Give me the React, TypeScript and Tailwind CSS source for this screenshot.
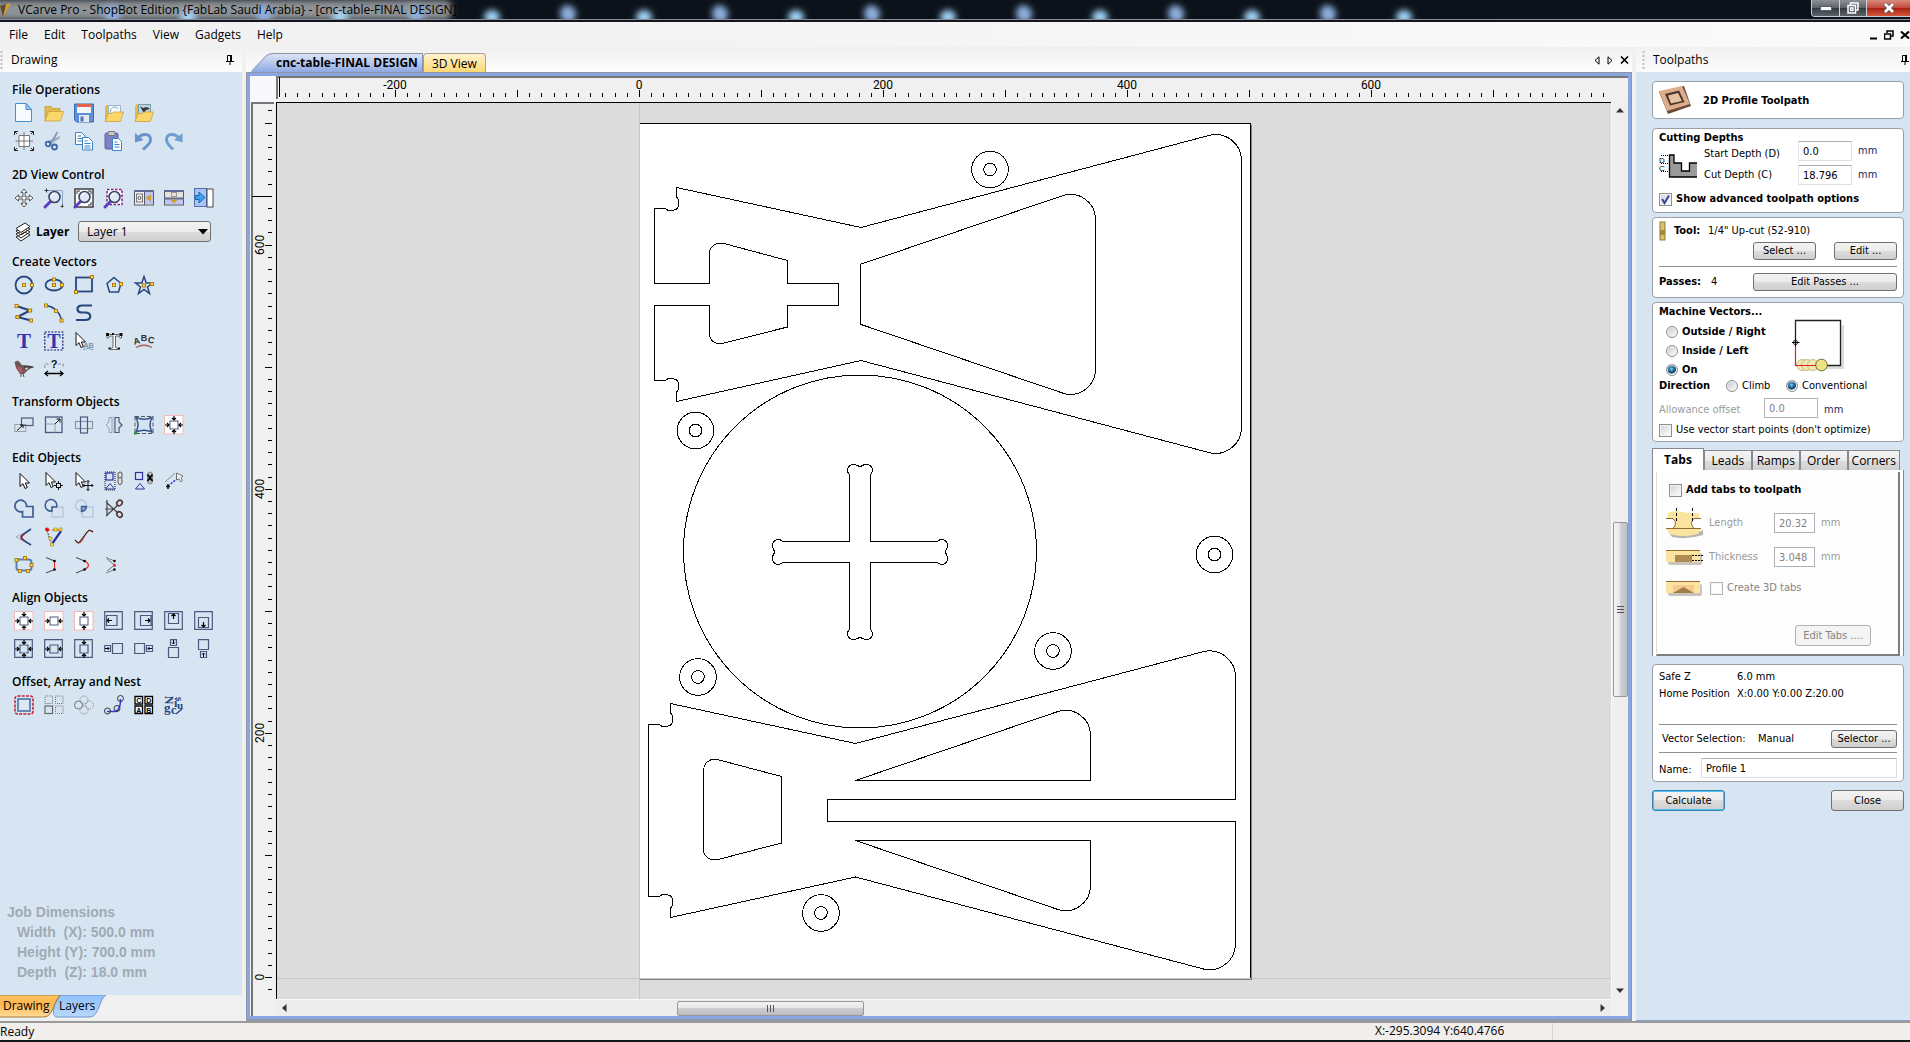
import { useState } from "react";
import type { ReactNode } from "react";

/* ================= ICONS ================= */

const NAVY = "#27467f";
const SLATE = "#4a5a7c";

const Node = ({ x, y }: { x: number; y: number }) => (
  <rect x={x - 1.5} y={y - 1.5} width="3" height="3" fill="#ffd84a" stroke="#b07c10" strokeWidth="1" />
);

const Lens = () => (
  <>
    <path d="M7 13L1 19" stroke="#5a3fc0" strokeWidth="3" strokeLinecap="round" />
    <circle cx="10.5" cy="9" r="5.5" fill="#dfe9f6" stroke="#3c4468" strokeWidth="1.6" />
    <path d="M7.5 8a3.5 3.5 0 0 1 3-2.6" stroke="#fff" strokeWidth="1.4" />
  </>
);

const Folder = () => (
  <>
    <path d="M1 5V3.5h6l1.5 2H16V9H4L1 18z" fill="#e3b94a" stroke="#c59a35" strokeWidth=".8" />
    <path d="M1 18L4.5 8.5H19.5L16.5 18z" fill="#fbd769" stroke="#cda03a" strokeWidth=".8" />
  </>
);

const Cursor = () => <path d="M2 1.5V14.5L5 11.7L7 16.5L9.3 15.5L7.3 11H11.5z" fill="#fff" stroke="#111" strokeWidth="1" />;

const Arrows = ({ h, v }: { h?: boolean; v?: boolean }) => (
  <>
    {h && <path d="M1 10H5M19 10H15M3 8L5 10L3 12M17 8L15 10L17 12" stroke="#000" strokeWidth="1.2" />}
    {v && <path d="M10 1V5M10 19V15M8 3L10 5L12 3M8 17L10 15L12 17" stroke="#000" strokeWidth="1.2" />}
  </>
);

const icons: Record<string, ReactNode> = {
  "New file": (
    <>
      <path d="M1.5 .5H12L17.5 6.5V18.5H1.5z" fill="#f7fbff" stroke="#4a8fca" />
      <path d="M12 .5V6.5H17.5z" fill="#9cc9ee" stroke="#4a8fca" />
    </>
  ),
  "Open file": <Folder />,
  "Save file": (
    <>
      <path d="M.5 1H19.5V19H2.5L.5 17z" fill="#5d8fd8" stroke="#3f6ab0" />
      <rect x="3" y="1" width="14" height="9" fill="#f3f6fb" />
      <rect x="3" y="1" width="14" height="3" fill="#e0644c" />
      <rect x="5" y="12" width="10" height="7" fill="#e4e8f0" />
      <rect x="6.5" y="13.5" width="3" height="5" fill="#4e74b4" />
    </>
  ),
  "Import vectors": (
    <>
      <path d="M1 18V3.5L2.5 2H6l1.5 2H17V12z" fill="#e3b94a" />
      <rect x="4.5" y="2.5" width="12" height="10" fill="#f5fafd" stroke="#9db8c8" />
      <path d="M7 10a4 4 0 0 1 7-4" stroke="#8aa" fill="none" />
      <path d="M1 18.5L4 10.5H8L10 9H19.5L16.5 18.5z" fill="#fbd769" stroke="#cda03a" strokeWidth=".8" />
    </>
  ),
  "Import bitmap": (
    <>
      <path d="M1 18V3.5L2.5 1H6l1.5 1H17V12z" fill="#e3b94a" />
      <rect x="4.5" y="1.5" width="12" height="10" fill="#b9d8dc" stroke="#7d9aa8" />
      <path d="M6 3l3 2 4-1 3 2-4 1-2 3-2-3z" fill="#40343a" />
      <path d="M1 18.5L4 10.5H8L10 9H19.5L16.5 18.5z" fill="#fbd769" stroke="#cda03a" strokeWidth=".8" />
    </>
  ),
  "Job setup": (
    <>
      <path d="M5 4.5h10.5V15.5H5zM10 1V19M1.5 10H19" fill="#fff" stroke="#777" />
      <path d="M.5 4V.5H4M.5 .5L3 3M16 .5H19.5V4M19.5 .5L17 3M.5 16V19.5H4M.5 19.5L3 17M19.5 16V19.5H16M19.5 19.5L17 17" stroke="#222" fill="none" />
    </>
  ),
  Cut: (
    <>
      <path d="M13.5 1L6 14M15 7L4 11" stroke="#8b9ab2" strokeWidth="2" />
      <path d="M16 5L8 12" stroke="#a9b5c6" strokeWidth="1.5" />
      <circle cx="4" cy="13" r="2.3" fill="none" stroke="#3c68ad" strokeWidth="1.8" />
      <circle cx="10.5" cy="16" r="2.5" fill="none" stroke="#3c68ad" strokeWidth="1.8" />
    </>
  ),
  Copy: (
    <>
      <path d="M1.5 1.5H7.5L11 5V13.5H1.5z" fill="#fff" stroke="#3b82c4" />
      <path d="M3.5 5h4M3.5 7.5h5M3.5 10h5" stroke="#3b82c4" />
      <path d="M8.5 6.5H14.5L18.5 10.5V19H8.5z" fill="#fff" stroke="#3b82c4" />
      <path d="M10.5 10h3M10.5 12.5h6M10.5 15h6M10.5 17h6" stroke="#3b82c4" />
    </>
  ),
  Paste: (
    <>
      <rect x="1" y="2" width="13" height="16" rx="1.5" fill="#7d82c4" stroke="#5a5fa6" />
      <rect x="4" y=".5" width="7" height="4" rx="1" fill="#c9c9c9" stroke="#777" />
      <path d="M8.5 7.5H14.5L17.5 10.5V19.5H8.5z" fill="#fff" stroke="#3b82c4" />
      <path d="M10.5 11h3M10.5 13.5h5M10.5 16h5" stroke="#3b82c4" />
    </>
  ),
  Undo: (
    <>
      <path d="M3 8C8 1.5 17 2 16.5 9C16.2 13.5 12 15.5 9 18.5" stroke="#6a93cd" strokeWidth="3" fill="none" />
      <path d="M1 2V11.5L9.5 9z" fill="#6a93cd" />
    </>
  ),
  Redo: (
    <>
      <path d="M16 8C11 1.5 2 2 2.5 9C2.8 13.5 7 15.5 9 18.5" stroke="#6fa0cd" strokeWidth="3" fill="none" />
      <path d="M18.5 2V11.5L10 9z" fill="#6fa0cd" />
    </>
  ),
  Pan: <path d="M10 1L13 4.5H11V9H15.5V7L19 10L15.5 13V11H11V15.5H13L10 19L7 15.5H9V11H4.5V13L1 10L4.5 7V9H9V4.5H7z" fill="#fff" stroke="#555" />,
  "Zoom box": (
    <>
      <path d="M2.5 2.5H18.5V18.5" stroke="#8fa5c6" fill="none" />
      <path d="M.5 2.5h4M2.5 .5v4M16.5 18.5h3M18.5 16.5v3" stroke="#333" />
      <Lens />
    </>
  ),
  "Zoom extents": (
    <>
      <rect x="1" y="1" width="18" height="18" fill="#fff" stroke="#333" strokeWidth="1.4" />
      <path d="M3 6V3H6M14 3H17V6M17 14V17H14" stroke="#333" fill="none" />
      <Lens />
    </>
  ),
  "Zoom selected": (
    <>
      <rect x="3" y="1.5" width="15" height="15" fill="#fff" stroke="#8a1a8a" strokeWidth="1.5" strokeDasharray="2.5 1.5" />
      <Lens />
    </>
  ),
  "Tile vertical": (
    <>
      <rect x=".5" y="3" width="19" height="14" fill="#f3f1ea" stroke="#555a66" />
      <rect x="11" y="4" width="8" height="12" fill="#bfc4f4" />
      <path d="M0 3H20" stroke="#5e6b94" strokeWidth="2" />
      <rect x="2.5" y="6" width="6" height="8" fill="none" stroke="#777" />
      <circle cx="5.5" cy="10" r="1.5" fill="none" stroke="#555" />
      <path d="M11.5 10L17 6.5V13.5z" fill="#c9a02c" />
      <path d="M10.5 3V17" stroke="#555a66" />
    </>
  ),
  "Tile horizontal": (
    <>
      <rect x=".5" y="3" width="19" height="14" fill="#e5e3dc" stroke="#555a66" />
      <rect x="1" y="11" width="18" height="5" fill="#bfc4f4" />
      <path d="M0 3H20M0 10.5H20" stroke="#5e6b94" strokeWidth="1.8" />
      <rect x="7.5" y="4.5" width="5" height="4" fill="none" stroke="#999" />
      <path d="M6 11.5H14L10 15.5z" fill="#c9a02c" />
    </>
  ),
  "Hide panel": (
    <>
      <rect x=".5" y=".5" width="12" height="18" fill="#a9c3f3" stroke="#4f6fb0" />
      <rect x="13" y="1" width="6" height="18" fill="#fff" stroke="#445" />
      <path d="M1.5 7.5H5V4L11 9.5L5 15V11.5H1.5z" fill="#3fa0ee" stroke="#1766b4" />
    </>
  ),
  Circle: (
    <>
      <circle cx="10" cy="10" r="8.5" stroke={NAVY} strokeWidth="1.8" fill="none" />
      <Node x={10} y={10} />
      <Node x={18} y={10} />
    </>
  ),
  Ellipse: (
    <>
      <ellipse cx="10" cy="10" rx="8.5" ry="5.5" stroke={NAVY} strokeWidth="1.8" fill="none" />
      <Node x={10} y={10} />
      <Node x={10} y={4.5} />
      <Node x={18} y={10} />
    </>
  ),
  Rectangle: (
    <>
      <rect x="2" y="2.5" width="16" height="14" stroke={NAVY} strokeWidth="1.8" fill="none" />
      <Node x={2} y={17} />
      <Node x={18} y={2} />
    </>
  ),
  Polygon: (
    <>
      <path d="M10 2.5L17 8.5L14.5 17H5.5L3 8.5z" stroke={NAVY} strokeWidth="1.5" fill="none" />
      <Node x={10} y={10} />
      <Node x={17} y={9} />
    </>
  ),
  Star: (
    <>
      <path d="M10 1.5L12.2 8H18.5L13.5 12L15.5 18.5L10 14.5L4.5 18.5L6.5 12L1.5 8H7.8z" stroke={NAVY} strokeWidth="1.5" fill="none" />
      <Node x={10} y={10.5} />
      <Node x={18} y={9} />
    </>
  ),
  Polyline: (
    <>
      <path d="M2.5 3L16 7.5L3.5 14L17 17.5" stroke={NAVY} strokeWidth="2.2" fill="none" />
      <Node x={2.5} y={3} />
      <Node x={16} y={7.5} />
      <Node x={3.5} y={14} />
      <Node x={17} y={17.5} />
    </>
  ),
  Arc: (
    <>
      <path d="M2 2.5C8 3 16 8 17.5 17.5" stroke={NAVY} strokeWidth="1.5" fill="none" />
      <Node x={2} y={2.5} />
      <Node x={12} y={8} />
      <Node x={17.5} y={17.5} />
    </>
  ),
  Curve: <path d="M18 2.5H8C2 2.5 2 9.5 8 9.5H11C18 9.5 18 17 11 17H2" stroke={NAVY} strokeWidth="2.2" fill="none" />,
  Text: <text x="10" y="17" textAnchor="middle" fontSize="21" fontWeight="700" fill="#3535ad" className="font-['Liberation_Serif',serif]">T</text>,
  "Auto layout text": (
    <>
      <rect x=".8" y="1" width="18" height="18" fill="none" stroke="#16166e" strokeWidth="1.2" strokeDasharray="2 1.3" />
      <text x="10" y="17" textAnchor="middle" fontSize="20" fontWeight="700" fill="#3535ad" className="font-['Liberation_Serif',serif]">T</text>
    </>
  ),
  "Text selection": (
    <>
      <Cursor />
      <text x="14.5" y="17" textAnchor="middle" fontSize="8" fill="#5d7190" className="font-['Liberation_Sans',sans-serif]">AB</text>
      <path d="M9 18.5Q14 16.5 19.5 18.5" stroke="#7da0c4" fill="none" />
    </>
  ),
  "Convert text": (
    <>
      <path d="M3 3.5H17.5V7H16L15 5H11.5V16.5L14 17.5V18.5H6.5V17.5L9 16.5V5H5.5L4.5 7H3z" fill="#fff" stroke="#555" strokeWidth=".9" />
      <path d="M2 2h3v3H2zM15.5 2h3v3h-3zM8 2h2v2H8zM4.5 16.5h2v2h-2zM14 16.5h2v2h-2z" fill="#111" />
    </>
  ),
  "Text on curve": (
    <>
      <g fontSize="9" fontWeight="700" fill="#333" textAnchor="middle" className="font-['Liberation_Sans',sans-serif]">
        <text x="3.5" y="13" transform="rotate(-14 3.5 13)">A</text>
        <text x="10" y="10">B</text>
        <text x="16.5" y="12" transform="rotate(14 16.5 12)">C</text>
      </g>
      <path d="M2 16.5Q10 12 18 16.5" stroke="#b05b5b" strokeWidth="1.4" fill="none" />
    </>
  ),
  "Trace bitmap": (
    <>
      <path d="M.5 3L4 1.5L8 6L15 6.5L19.5 8L14 11L10 15L6 15L2 9z" fill="#6b5a58" />
      <path d="M3 7L8 9L8.5 14L5 13z" fill="#c0565a" />
      <path d="M11 8.5L15 8L12 11z" fill="#e8e2dc" />
      <path d="M7 15V18M9 15L10 18" stroke="#554" />
      <path d="M10 8L19.5 8" stroke="#222" />
    </>
  ),
  Dimension: (
    <>
      <path d="M.8 9V5H6M14 5H19.2V9" stroke="#888" strokeDasharray="3 1.5" fill="none" />
      <text x="10" y="9" textAnchor="middle" fontSize="11" fontWeight="700" fill="#111" className="font-['Liberation_Sans',sans-serif]">?</text>
      <path d="M1 14.5H19M4 12L1 14.5L4 17M16 12L19 14.5L16 17" stroke="#000" strokeWidth="1.3" fill="none" />
    </>
  ),
  Move: (
    <>
      <rect x=".8" y="9.5" width="11" height="7" stroke="#9aa0aa" fill="none" />
      <rect x="7.5" y="3" width="11.5" height="7.5" stroke={SLATE} strokeWidth="1.2" fill="none" />
      <path d="M3 15.5L9 10M9 13V10H6" stroke="#111" fill="none" />
    </>
  ),
  "Set size": (
    <>
      <rect x="1.5" y="2" width="16.5" height="15.5" stroke={SLATE} strokeWidth="1.3" fill="none" />
      <path d="M1.5 9H11V17.5" stroke="#9aa0aa" fill="none" />
      <path d="M11 9L16 4M12.5 4H16V7.5" stroke="#111" fill="none" />
    </>
  ),
  Rotate: (
    <>
      <rect x="1.5" y="6.5" width="17" height="7" stroke="#8f98aa" strokeWidth="1.2" fill="none" />
      <rect x="6.5" y="2" width="7" height="16" stroke={SLATE} strokeWidth="1.2" fill="none" />
    </>
  ),
  Mirror: (
    <>
      <path d="M8 2.5H5V7L2 10L5 13V17.5H8z" stroke="#98a0b0" fill="none" />
      <path d="M11 2.5H15V7L18 10L15 13V17.5H11z" stroke={SLATE} strokeWidth="1.2" fill="none" />
      <path d="M9.5 1V19" stroke="#b8c0cc" strokeDasharray="2 1" />
    </>
  ),
  Distort: (
    <>
      <rect x="1" y="1.5" width="18" height="17" stroke="#555" strokeDasharray="4 2" fill="none" />
      <path d="M2 2.5Q10 6 18 2.5Q14 10 18 17Q10 13.5 2 17Q6 10 2 2.5z" stroke="#35558f" strokeWidth="1.5" fill="none" />
      <rect x="0" y="17" width="2.5" height="2.5" fill="#1d9a38" />
    </>
  ),
  "Align to material": (
    <>
      <rect x=".5" y=".5" width="18.5" height="18.5" fill="#fff" stroke="#f3b8b8" />
      <rect x="6" y="6" width="8" height="8" fill="none" stroke={SLATE} />
      <Arrows h v />
    </>
  ),
  Select: (
    <g transform="translate(4 1)">
      <Cursor />
    </g>
  ),
  "Node edit": (
    <>
      <Cursor />
      <rect x="12.5" y="12.5" width="4" height="4" fill="none" stroke="#111" />
      <path d="M14.5 10v2.5M14.5 16.5V19M10 14.5h2.5M16.5 14.5H19" stroke="#111" />
    </>
  ),
  "Transform mode": (
    <>
      <Cursor />
      <path d="M14 9.5V19.5M9 14.5H19M12.5 11L14 9.5L15.5 11M12.5 18L14 19.5L15.5 18M10.5 13L9 14.5L10.5 16M17.5 13L19 14.5L17.5 16" stroke="#111" fill="none" />
    </>
  ),
  Group: (
    <>
      <rect x="1" y="1" width="10" height="18" fill="none" stroke="#111" strokeDasharray="1 1" />
      <rect x="2" y="2" width="7" height="7" fill="none" stroke="#3030a0" strokeWidth="1.2" />
      <path d="M1.5 18L6 12.5L10.5 18z" fill="none" stroke="#3030a0" />
      <rect x="14" y="1" width="4" height="7" rx="2" fill="#ddd" stroke="#555" />
      <rect x="14" y="6.5" width="4" height="7" rx="2" fill="#ddd" stroke="#555" />
    </>
  ),
  Ungroup: (
    <>
      <rect x="1.5" y="1.5" width="7" height="7" fill="none" stroke="#3030a0" strokeWidth="1.2" />
      <path d="M1.5 18L6 12.5L10.5 18z" fill="none" stroke="#3030a0" />
      <rect x="13.5" y="1" width="5" height="12" rx="2.5" fill="#bbb" stroke="#888" />
      <path d="M13.5 3.5L18.5 10M18.5 3.5L13.5 10" stroke="#000" strokeWidth="1.8" />
    </>
  ),
  Measure: (
    <>
      <path d="M1 11L11 2" stroke="#888" />
      <path d="M4 15L14 7" stroke="#2424c0" strokeDasharray="2 1.5" strokeWidth="1.4" />
      <path d="M2 15.5H6M4 13V18" stroke="#111" strokeWidth="1.6" />
      <path d="M12.5 2V9L15 8L17 11L18.5 9.5L17 7L19 5z" fill="#eee" stroke="#666" strokeWidth=".9" />
    </>
  ),
  Weld: <path d="M8.5 12.5A5.8 5.8 0 1 1 12.5 7.5H19V18H8.5z" stroke="#3d5c94" strokeWidth="1.7" fill="none" />,
  Subtract: (
    <>
      <rect x="8" y="8" width="11" height="10" stroke="#b4c4da" strokeWidth="1.3" fill="none" />
      <path d="M8 12A5.8 5.8 0 1 1 12.5 8H8z" stroke="#3d5c94" strokeWidth="1.6" fill="none" />
    </>
  ),
  Intersect: (
    <>
      <circle cx="7" cy="6.5" r="5.5" stroke="#b4c4da" strokeWidth="1.3" fill="none" />
      <rect x="8" y="8" width="11" height="10" stroke="#b4c4da" strokeWidth="1.3" fill="none" />
      <path d="M7.5 7.5H12.5Q12 12 7.5 12.5z" stroke="#3d5c94" strokeWidth="1.4" fill="#8ea8d0" />
    </>
  ),
  Trim: (
    <>
      <path d="M1 10H10M3 1V17M2 3L14 14M2 17L14 6" stroke="#444" strokeWidth="1.2" />
      <ellipse cx="15.5" cy="4" rx="3" ry="2.4" transform="rotate(-45 15.5 4)" stroke="#533" strokeWidth="1.6" fill="none" />
      <ellipse cx="15.5" cy="15.5" rx="3" ry="2.4" transform="rotate(45 15.5 15.5)" stroke="#533" strokeWidth="1.6" fill="none" />
    </>
  ),
  Fillet: (
    <>
      <path d="M17 2L9 7.5Q5 10 9 13L17 18" stroke={NAVY} strokeWidth="1.6" fill="none" />
      <path d="M10 7Q5 10 10 13.5" stroke="#a01c3c" strokeWidth="1.8" fill="none" />
      <path d="M9 6.5L2 10L9 14" stroke="#99a" strokeWidth=".8" fill="none" />
    </>
  ),
  "Join vectors": (
    <>
      <path d="M3 3H16" stroke="#d33" strokeDasharray="3 2" />
      <path d="M3 3L6.5 15" stroke="#333" strokeDasharray="2 1" />
      <path d="M8 17L17 4" stroke="#2c2ca8" strokeWidth="2.2" />
      <circle cx="3" cy="2.5" r="2" fill="#e11" />
      <path d="M10 1h3v3h-3zM15 1h3v3h-3zM5 10h3v3H5zM6.5 16h3v3h-3z" fill="#ffe13a" stroke="#998112" strokeWidth=".6" />
    </>
  ),
  "Curve fit": (
    <>
      <path d="M1 13Q5 20 10 10T19 5" stroke="#c43a3a" strokeWidth="1.3" fill="none" />
      <path d="M1 13L4.5 16L10 9L15 3L19 5" stroke="#222" fill="none" />
    </>
  ),
  "Close vectors": (
    <>
      <rect x="2.5" y="4.5" width="15" height="11" rx="3" stroke="#5d7fae" strokeWidth="2" fill="none" />
      <Node x={2.5} y={5} />
      <Node x={11} y={3} />
      <Node x={17.5} y={10} />
      <Node x={6} y={16} />
      <Node x={14} y={16} />
    </>
  ),
  "Join line": (
    <>
      <path d="M2 2.5L10.5 6M10.5 14.5L2 18" stroke="#444" />
      <path d="M10.5 6V14.5" stroke="#e22" />
      <circle cx="10.5" cy="6" r="1.3" fill="#000" />
      <circle cx="10.5" cy="14.5" r="1.3" fill="#000" />
    </>
  ),
  "Join curve": (
    <>
      <path d="M2 2.5L10.5 6M10.5 14.5L2 18" stroke="#444" />
      <path d="M10.5 6Q18.5 10 10.5 14.5" stroke="#e22" strokeWidth="1.2" fill="none" />
      <circle cx="10.5" cy="6" r="1.3" fill="#000" />
      <circle cx="10.5" cy="14.5" r="1.3" fill="#000" />
    </>
  ),
  "Join move": (
    <>
      <path d="M2 2.5L10.5 6M10.5 14.5L2 18M3 4L10.5 10L3 16" stroke="#777" fill="none" />
      <circle cx="10.5" cy="6" r="1.2" fill="#000" />
      <circle cx="10.5" cy="14.5" r="1.2" fill="#000" />
      <circle cx="10.5" cy="10.2" r="1.5" fill="#e22" />
    </>
  ),
  "Center horizontal": (
    <>
      <rect x=".5" y=".5" width="18.5" height="18.5" fill="#fff" stroke="#f3b8b8" />
      <rect x="6" y="6" width="8" height="8" fill="none" stroke={SLATE} />
      <Arrows h />
    </>
  ),
  "Center vertical": (
    <>
      <rect x=".5" y=".5" width="18.5" height="18.5" fill="#fff" stroke="#f3b8b8" />
      <rect x="6" y="6" width="8" height="8" fill="none" stroke={SLATE} />
      <Arrows v />
    </>
  ),
  "Align left": (
    <>
      <path d="M.7 .7H18.3V18.3H.7zM2.5 4.5H13V14.5H2.5z" stroke={SLATE} strokeWidth="1.2" fill="none" />
      <path d="M3 9.5H8M5 7.5L3 9.5L5 11.5" stroke="#000" strokeWidth="1.2" fill="none" />
    </>
  ),
  "Align right": (
    <>
      <path d="M.7 .7H18.3V18.3H.7zM6.5 4.5H17V14.5H6.5z" stroke={SLATE} strokeWidth="1.2" fill="none" />
      <path d="M11 9.5H16M14 7.5L16 9.5L14 11.5" stroke="#000" strokeWidth="1.2" fill="none" />
    </>
  ),
  "Align top": (
    <>
      <path d="M.7 .7H18.3V18.3H.7zM4.5 2.5H14.5V12.5H4.5z" stroke={SLATE} strokeWidth="1.2" fill="none" />
      <path d="M9.5 8V3M7.5 5L9.5 3L11.5 5" stroke="#000" strokeWidth="1.2" fill="none" />
    </>
  ),
  "Align bottom": (
    <>
      <path d="M.7 .7H18.3V18.3H.7zM4.5 6.5H14.5V16.5H4.5z" stroke={SLATE} strokeWidth="1.2" fill="none" />
      <path d="M9.5 11V16M7.5 14L9.5 16L11.5 14" stroke="#000" strokeWidth="1.2" fill="none" />
    </>
  ),
  "Center in selection": (
    <>
      <path d="M.7 .7H18.3V18.3H.7zM6 6H14V14H6z" stroke={SLATE} strokeWidth="1.2" fill="none" />
      <Arrows h v />
    </>
  ),
  "Center across": (
    <>
      <path d="M.7 .7H18.3V18.3H.7zM6 6H14V14H6z" stroke={SLATE} strokeWidth="1.2" fill="none" />
      <Arrows h />
    </>
  ),
  "Center down": (
    <>
      <path d="M.7 .7H18.3V18.3H.7zM6 6H14V14H6z" stroke={SLATE} strokeWidth="1.2" fill="none" />
      <Arrows v />
    </>
  ),
  "Place left": (
    <>
      <path d="M8.5 4.5H18.5V14.5H8.5zM.7 6.5H6.5V12.5H.7z" stroke={SLATE} strokeWidth="1.2" fill="none" />
      <path d="M1 9.5H5M3.5 8L5 9.5L3.5 11" stroke="#000" fill="none" />
    </>
  ),
  "Place right": (
    <>
      <path d="M.7 4.5H10.5V14.5H.7zM12.5 6.5H18.5V12.5H12.5z" stroke={SLATE} strokeWidth="1.2" fill="none" />
      <path d="M18 9.5H14M15.5 8L14 9.5L15.5 11" stroke="#000" fill="none" />
    </>
  ),
  "Place above": (
    <>
      <path d="M4.5 8.5H14.5V18.5H4.5zM6.5 .7H12.5V6.5H6.5z" stroke={SLATE} strokeWidth="1.2" fill="none" />
      <path d="M9.5 1V5M8 3.5L9.5 5L11 3.5" stroke="#000" fill="none" />
    </>
  ),
  "Place below": (
    <>
      <path d="M4.5 .7H14.5V10.5H4.5zM6.5 12.5H12.5V18.5H6.5z" stroke={SLATE} strokeWidth="1.2" fill="none" />
      <path d="M9.5 18V14M8 15.5L9.5 14L11 15.5" stroke="#000" fill="none" />
    </>
  ),
  Offset: (
    <>
      <rect x="1" y="1" width="18" height="18" rx="2.5" stroke="#c22232" strokeWidth="1.6" strokeDasharray="3 1.2" fill="none" />
      <rect x="4" y="4" width="12" height="12" fill="#dbe7f4" stroke="#5b7eb0" strokeWidth="1.8" />
    </>
  ),
  "Array copy": (
    <>
      <path d="M1 1H8.5V8.5H1zM11.5 1H19V8.5H11.5zM11.5 11H19V18.5H11.5z" stroke="#777" strokeDasharray="1 1" fill="none" />
      <rect x="1" y="11" width="7.5" height="7.5" stroke="#666" strokeWidth="1.2" fill="none" />
    </>
  ),
  "Circular copy": (
    <>
      <circle cx="10" cy="5" r="4" stroke="#888" strokeDasharray="1.2 1" fill="none" />
      <circle cx="10" cy="15" r="4" stroke="#888" strokeDasharray="1.2 1" fill="none" />
      <circle cx="15.5" cy="10" r="4" stroke="#888" strokeDasharray="1.2 1" fill="none" />
      <circle cx="4.5" cy="10" r="4" stroke="#777" fill="none" />
    </>
  ),
  "Copy along vectors": (
    <>
      <path d="M3 16.5H12Q17 13 16.5 4" stroke="#3c3ce0" strokeWidth="1.6" fill="none" />
      <circle cx="3.5" cy="16" r="3" stroke="#333" fill="none" />
      <circle cx="13" cy="13.5" r="3" stroke="#333" fill="none" />
      <circle cx="16.5" cy="3.5" r="3" stroke="#333" fill="none" />
    </>
  ),
  "Block copy": (
    <>
      <path d="M1 1.5H8.5V9H1zM11 1.5H18.5V9H11zM1 11H8.5V18.5H1zM11 11H18.5V18.5H11z" fill="#fff" stroke="#000" strokeWidth="1.3" />
      <g fontSize="7" fontWeight="700" textAnchor="middle" fill="#000" className="font-['Liberation_Sans',sans-serif]">
        <text x="4.8" y="8">C</text>
        <text x="14.8" y="8">D</text>
        <text x="4.8" y="17.5">A</text>
        <text x="14.8" y="17.5">B</text>
      </g>
    </>
  ),
  Nesting: (
    <g fontWeight="700" fill="#27467f" className="font-['Liberation_Serif',serif]">
      <text x="5" y="9" fontSize="12" textAnchor="middle" transform="rotate(90 5 5)">N</text>
      <text x="10" y="12" fontSize="12">i</text>
      <text x="0" y="17" fontSize="13">g</text>
      <text x="7" y="19" fontSize="12">c</text>
      <text x="12" y="6" fontSize="11" transform="rotate(90 14 4)">s</text>
      <text x="13" y="14" fontSize="11">u</text>
      <path d="M12 19L18 14" stroke="#27467f" strokeWidth="1.4" />
    </g>
  ),
};

function Tool({ name }: { name: string }) {
  return (
    <button aria-label={name} title={name} className="flex h-7 w-[30px] items-center">
      <svg className="overflow-visible" width="20" height="20" viewBox="0 0 20 20" fill="none">
        {icons[name]}
      </svg>
    </button>
  );
}

/* ================= SMALL CONTROLS ================= */

const btn =
  "rounded-[3px] border border-[#707070] bg-[linear-gradient(#f3f3f3,#ebebeb_50%,#dcdcdc_50%,#cfcfcf)] text-center text-black";

const field = "h-5 border border-[#dfe0e6] border-t-[#abadb3] bg-white px-1 text-[11px] text-black outline-none";
const fieldOff = "h-5 border border-[#b0b2b8] bg-white px-1 text-[11px] text-[#838383] outline-none";

function Check({ label, bold, on, disabled }: { label: string; bold?: boolean; on?: boolean; disabled?: boolean }) {
  return (
    <label className={"flex items-center gap-1 whitespace-nowrap " + (bold ? "font-bold " : "") + (disabled ? "text-[#838383]" : "")}>
      <span className="relative flex">
        <input
          type="checkbox"
          defaultChecked={on}
          disabled={disabled}
          className="peer h-[13px] w-[13px] appearance-none border border-[#8e8f8f] bg-[linear-gradient(135deg,#cfd3d8,#fff)] shadow-[inset_0_0_0_1px_#f4f4f4] disabled:border-[#b5b5b5] disabled:bg-none"
        />
        <svg className="pointer-events-none absolute inset-0 hidden peer-checked:block" width="13" height="13" viewBox="0 0 13 13">
          <path d="M3 6L5.5 10L10 2.5" fill="none" stroke="#31479c" strokeWidth="2" />
        </svg>
      </span>
      {label}
    </label>
  );
}

function Radio({ group, label, bold, on }: { group: string; label: string; bold?: boolean; on?: boolean }) {
  return (
    <label className={"flex items-center gap-1 whitespace-nowrap " + (bold ? "font-bold" : "")}>
      <input
        type="radio"
        name={group}
        defaultChecked={on}
        className="h-3 w-3 appearance-none rounded-full border border-[#8e8f8f] bg-[linear-gradient(135deg,#c4c8cc,#fff)] shadow-[inset_0_0_0_1px_#f4f4f4] checked:bg-[radial-gradient(circle_at_45%_40%,#8fd6f4_0%,#1d6fa5_30%,#0b3557_52%,#e8eef2_60%)]"
      />
      {label}
    </label>
  );
}

function Card({ className, children }: { className?: string; children: ReactNode }) {
  return <section className={"rounded-[4px] border border-[#9b9fa6] bg-white px-1.5 " + (className ?? "")}>{children}</section>;
}

function PanelHeader({ title, className }: { title: string; className: string }) {
  return (
    <header className={"flex h-[25px] items-center justify-between bg-[linear-gradient(#f1f1f1,#fcfcfc)] text-xs " + className}>
      <span className="flex items-center gap-2">
        <svg width="3" height="20" viewBox="0 0 3 20">
          <path d="M1.5 1V20" stroke="#bdbdbd" strokeWidth="2" strokeDasharray="2 2" />
        </svg>
        {title}
      </span>
      <button aria-label={"Pin " + title}>
        <svg width="8" height="10" viewBox="0 0 8 10" fill="none" stroke="#000">
          <path d="M1.5 6V.5H6M5.5 .5V6M0 6.5H8M4 7V10" />
          <path d="M5 0V6" strokeWidth="2" />
        </svg>
      </button>
    </header>
  );
}

/* ================= WINDOW CHROME ================= */

const lights = Array.from({ length: 18 }, (_, i) => 112 + i * 76);

function TitleBar() {
  return (
    <div className="relative flex h-[22px] shrink-0 justify-between overflow-hidden border-b-2 border-[#15151f] bg-[#0b1219]">
      <svg className="absolute inset-0 h-full w-full" aria-hidden="true">
        <defs>
          <filter id="soft" x="-50%" y="-50%" width="200%" height="200%">
            <feGaussianBlur stdDeviation="3" />
          </filter>
        </defs>
        <rect x="-20" y="0" width="472" height="20" rx="8" fill="#a3a8ad" fillOpacity=".85" filter="url(#soft)" />
        {lights.map((x, i) => (
          <ellipse
            key={x}
            cx={x}
            cy={i % 2 ? 17 : 14}
            rx="8"
            ry={i % 2 ? 7 : 9}
            fill={i % 2 ? "#a4d4f8" : "#8fb0e0"}
            transform={i % 2 ? undefined : `rotate(-20 ${x} 14)`}
            filter="url(#soft)"
          />
        ))}
        <path d="M0 19.5H4000" stroke="#8c8c96" />
      </svg>
      <div className="relative flex items-start gap-1.5 whitespace-nowrap pt-0.5 text-xs leading-4">
        <svg width="12" height="16" viewBox="0 0 12 16">
          <path d="M0 4L11 1L3 15z" fill="#d99a2b" />
          <path d="M0 4L6 2L3 15z" fill="#5a4a36" />
        </svg>
        VCarve Pro - ShopBot Edition {"{FabLab Saudi Arabia}"} - [cnc-table-FINAL DESIGN]
      </div>
      <div className="relative flex h-[17px] overflow-hidden rounded-bl-[4px] border-b border-l border-[#c8ccd2]">
        <button aria-label="Minimize" className="flex w-7 items-center justify-center border-r border-[#d0d4da] bg-[linear-gradient(#8d9197,#5c6168_50%,#33383f_50%,#5d636b)]">
          <svg width="12" height="6" viewBox="0 0 12 6"><rect x=".5" y="1.5" width="11" height="4" fill="#fff" stroke="#555b70" /></svg>
        </button>
        <button aria-label="Restore" className="flex w-[27px] items-center justify-center border-r border-[#d0d4da] bg-[linear-gradient(#8d9197,#5c6168_50%,#33383f_50%,#5d636b)]">
          <svg width="12" height="12" viewBox="0 0 12 12" fill="none" stroke="#fff" strokeWidth="1.5"><path d="M3.5 3V1H11V8H9M1 3.5H8.5V11H1zM3.5 6H6V8.5H3.5z" /></svg>
        </button>
        <button aria-label="Close window" className="flex w-[43px] items-center justify-center bg-[linear-gradient(#d98b80,#c2473a_50%,#a81f10_50%,#d0583a)]">
          <svg width="12" height="10" viewBox="0 0 12 10"><path d="M2 1L10 9M10 1L2 9" stroke="#555b70" strokeWidth="4" /><path d="M2 1L10 9M10 1L2 9" stroke="#fff" strokeWidth="2.5" /></svg>
        </button>
      </div>
    </div>
  );
}

function MenuBar() {
  return (
    <nav className="flex h-[25px] shrink-0 items-center justify-between bg-[linear-gradient(90deg,#f0f0f0,#fafafa)] pl-[9px] text-xs">
      <div className="flex gap-4">
        {["File", "Edit", "Toolpaths", "View", "Gadgets", "Help"].map((m) => (
          <button key={m}>{m}</button>
        ))}
      </div>
      <div className="flex items-center gap-1.5">
        <button aria-label="Minimize document">
          <svg width="8" height="10" viewBox="0 0 8 10"><path d="M0 8.5H7" stroke="#000" strokeWidth="2" /></svg>
        </button>
        <button aria-label="Restore document">
          <svg width="10" height="10" viewBox="0 0 10 10" fill="none" stroke="#000"><path d="M3 3V1H9V6H7M.5 4H6.5V9H.5z" strokeWidth="1.5" /></svg>
        </button>
        <button aria-label="Close document">
          <svg width="10" height="10" viewBox="0 0 10 10"><path d="M1 1.5L9 8.5M9 1.5L1 8.5" stroke="#000" strokeWidth="2.2" /></svg>
        </button>
      </div>
    </nav>
  );
}

/* ================= DRAWING PANEL ================= */

const sections = [
  {
    title: "Create Vectors",
    rows: [
      ["Circle", "Ellipse", "Rectangle", "Polygon", "Star"],
      ["Polyline", "Arc", "Curve"],
      ["Text", "Auto layout text", "Text selection", "Convert text", "Text on curve"],
      ["Trace bitmap", "Dimension"],
    ],
  },
  { title: "Transform Objects", rows: [["Move", "Set size", "Rotate", "Mirror", "Distort", "Align to material"]] },
  {
    title: "Edit Objects",
    rows: [
      ["Select", "Node edit", "Transform mode", "Group", "Ungroup", "Measure"],
      ["Weld", "Subtract", "Intersect", "Trim"],
      ["Fillet", "Join vectors", "Curve fit"],
      ["Close vectors", "Join line", "Join curve", "Join move"],
    ],
  },
  {
    title: "Align Objects",
    rows: [
      ["Align to material", "Center horizontal", "Center vertical", "Align left", "Align right", "Align top", "Align bottom"],
      ["Center in selection", "Center across", "Center down", "Place left", "Place right", "Place above", "Place below"],
    ],
  },
  {
    title: "Offset, Array and Nest",
    rows: [["Offset", "Array copy", "Circular copy", "Copy along vectors", "Block copy", "Nesting"]],
  },
];

function ToolSection({ title, rows }: { title: string; rows: string[][] }) {
  return (
    <section className="mt-2.5">
      <h2 className="h-[18px] pl-3 text-xs font-semibold leading-[18px]">{title}</h2>
      {rows.map((row) => (
        <div key={row[0]} className="flex pl-3.5">
          {row.map((name) => (
            <Tool key={name} name={name} />
          ))}
        </div>
      ))}
    </section>
  );
}

function DrawingPanel() {
  return (
    <aside className="flex w-[242px] shrink-0 flex-col">
      <PanelHeader title="Drawing" className="pr-2" />
      <div className="flex flex-1 flex-col bg-[#d7e5f2]">
        <div className="-mt-px pb-px">
          <ToolSection
            title="File Operations"
            rows={[
              ["New file", "Open file", "Save file", "Import vectors", "Import bitmap"],
              ["Job setup", "Cut", "Copy", "Paste", "Undo", "Redo"],
            ]}
          />
        </div>
        <ToolSection
          title="2D View Control"
          rows={[["Pan", "Zoom box", "Zoom extents", "Zoom selected", "Tile vertical", "Tile horizontal", "Hide panel"]]}
        />
        <div className="flex h-[31px] items-end pb-px pl-[15px]">
          <svg width="16" height="20" viewBox="0 0 16 20" fill="#fff" stroke="#222">
            <path d="M1 15L6 19L15 13L10 10zM1 12L6 16L15 10L10 7zM1 9L6 13L15 7L10 4z" />
            <path d="M1 6.5L6 10.5L15 4.5L10 1z" />
          </svg>
          <label htmlFor="layer" className="ml-[5px] w-[42px] text-xs font-bold leading-5">
            Layer
          </label>
          <span className="relative flex">
            <select id="layer" className={btn + " h-[21px] w-[133px] appearance-none pl-2 text-left text-xs"}>
              <option>Layer 1</option>
            </select>
            <svg className="pointer-events-none absolute right-[3px] top-2" width="10" height="6" viewBox="0 0 10 6">
              <path d="M0 0H10L5 5.5z" />
            </svg>
          </span>
        </div>
        {sections.map((s) => (
          <ToolSection key={s.title} title={s.title} rows={s.rows} />
        ))}
        <div className="mt-auto whitespace-pre pb-[13px] pl-[7px] font-['Liberation_Sans',sans-serif] text-sm font-bold leading-5 text-[#9faab5]">
          <p>Job Dimensions</p>
          <p className="pl-2.5">Width  (X): 500.0 mm</p>
          <p className="pl-2.5">Height (Y): 700.0 mm</p>
          <p className="pl-2.5">Depth  (Z): 18.0 mm</p>
        </div>
      </div>
      <div className="relative flex h-[26px] items-start text-xs">
        <svg className="absolute left-0 top-0" width="110" height="23" viewBox="0 0 110 23">
          <defs>
            <linearGradient id="tabOrange" x2="0" y2="1">
              <stop offset="0" stopColor="#ffc565" />
              <stop offset=".4" stopColor="#ffb44c" />
              <stop offset="1" stopColor="#ffdc9a" />
            </linearGradient>
            <linearGradient id="tabBlue" x2="0" y2="1">
              <stop offset="0" stopColor="#8fc0fb" />
              <stop offset="1" stopColor="#b9d8fc" />
            </linearGradient>
          </defs>
          <path d="M60 0H106C100 2 99 22 90 22H57C52 22 53 14 55 9z" fill="url(#tabBlue)" stroke="#6f96cf" />
          <path d="M-1 0H61C54 3 54 22 44 22H-1z" fill="url(#tabOrange)" stroke="#a07a3c" />
        </svg>
        <button className="relative h-[22px] w-14 pl-[3px] text-left">Drawing</button>
        <button className="relative h-[22px] pl-[3px]">Layers</button>
      </div>
    </aside>
  );
}

/* ================= 2D VIEW ================= */

const SCALE = 1.2207; // screen px per mm
const hTicks = Array.from({ length: 109 }, (_, i) => -290 + i * 10);
const vTicks = Array.from({ length: 73 }, (_, i) => -10 + i * 10);

function HRuler() {
  return (
    <svg className="h-[23px] w-full bg-[#f0f0f0]" shapeRendering="crispEdges">
      <path d="M0 .5H4000M.5 0V30" stroke="#777" strokeWidth="2" />
      {hTicks.map((t) => {
        const x = Math.round(363 + t * SCALE) + 0.5;
        return <path key={t} d={`M${x} ${t % 100 === 0 ? 14 : 17}V21`} stroke="#000" />;
      })}
      <path d="M3.5 1V21" stroke="#000" />
      <g fontSize="12" textAnchor="middle" className="font-[Roboto,sans-serif]">
        {[-200, 0, 200, 400, 600].map((t) => (
          <text key={t} x={Math.round(363 + t * SCALE)} y="13">
            {t}
          </text>
        ))}
      </g>
    </svg>
  );
}

function VRuler() {
  return (
    <svg className="h-full w-[23px] bg-[#f0f0f0]" shapeRendering="crispEdges">
      <path d="M0 .5H24M.5 0V4000" stroke="#777" strokeWidth="2" />
      {vTicks.map((t) => {
        const y = Math.round(875 - t * SCALE) + 0.5;
        return <path key={t} d={`M${t % 100 === 0 ? 14 : 17} ${y}H21`} stroke="#000" />;
      })}
      <path d="M1 94.5H17" stroke="#000" />
      <g fontSize="12" textAnchor="middle" className="font-[Roboto,sans-serif]">
        {[0, 200, 400, 600].map((t) => (
          <text key={t} transform={`translate(13 ${Math.round(875 - t * SCALE)}) rotate(-90)`}>
            {t}
          </text>
        ))}
      </g>
    </svg>
  );
}

const washers = [
  [990, 169.5],
  [695.5, 430.5],
  [1214.5, 554.5],
  [1053, 651],
  [698, 677],
  [821, 913],
];

const parts = [
  // slotted leg
  "M676.5 187.5V196.5C677 198.5 679 198 678.5 201V206C678 211 672 210.5 669 210.5C667 210.5 667 208.5 664 208.5H654.5V283.5H709.5V253C710 246 716 242 724 243.5L787.5 260.5V283.5H838.5V305.5H787.5V327L722 343.5C715 344.5 710 341 709.5 334V305.5H654.5V380.5H664C667 380.5 667 378.5 669 378.5C672 378.5 678 378.5 678.5 383V388C679 391 677 390.5 676.5 392.5V401.5L861 360.5L1209.5 452.7A26 26 0 0 0 1241.5 428V160A26 26 0 0 0 1209.5 135.3L861 227.5z",
  "M860.5 264.3L1062.5 195.7A25 25 0 0 1 1095.5 219V370A25 25 0 0 1 1062.5 393L860.5 324.3z",
  // solid leg
  "M670.5 703.5V712.5C671 714.5 673 714 672.5 717V722C672 727 666 726.5 663 726.5C661 726.5 661 724.5 658 724.5H648.5V896.5H658C661 896.5 661 894.5 663 894.5C666 894.5 672 894.5 672.5 899V904C673 907 671 906.5 670.5 908.5V917.5L855.5 877L1203.5 969A26 26 0 0 0 1235.5 944.3V821.5H827.5V799.5H1235.5V676.5A26 26 0 0 0 1203.5 651.6L855.5 743.5z",
  "M703.5 770C704 763 710 757.5 718 759.7L781.5 776.5V843L718 859.5C710 861 704 857 703.5 850z",
  "M855.5 780.5L1056.5 712A25 25 0 0 1 1090.5 735.5V780.5z",
  "M855.5 840.5L1056.5 909A25 25 0 0 0 1090.5 885.5V840.5z",
  // dog-boned cross slot
  "M849.5 541.5V475C845 469 849 464.5 853 464.5C857 464.5 858 465 860 467C862 465 863 464.5 867 464.5C871 464.5 875 469 870.5 475V541.5H937C943 537 947.5 541 947.5 545C947.5 549 947 550 945 552C947 554 947.5 555 947.5 559C947.5 563 943 567 937 562.5H870.5V629C875 635 871 639.5 867 639.5C863 639.5 862 639 860 637C858 639 857 639.5 853 639.5C849 639.5 845 635 849.5 629V562.5H783C777 567 772.5 563 772.5 559C772.5 555 773 554 775 552C773 550 772.5 549 772.5 545C772.5 541 777 537 783 541.5z",
];

function Canvas() {
  return (
    <svg className="h-full w-full bg-[#dcdcdc]" shapeRendering="crispEdges">
      <path d="M0 .5H4000M.5 0V4000" stroke="#000" />
      <g transform="translate(-276 -102)" fill="none">
        <rect x="640" y="123" width="610" height="855" fill="#fff" />
        <path d="M639.5 103V4000M277 978.5H4000" stroke="#c6c6c6" />
        <path d="M1251.5 125V980M640 979.5H1252" stroke="#808080" />
        <path d="M640 123.5H1250.5V978" stroke="#000" />
        <g stroke="#000">
          {parts.map((d) => (
            <path key={d} d={d} />
          ))}
          <circle cx="860" cy="551.5" r="176.5" />
          {washers.map(([x, y]) => (
            <g key={x}>
              <circle cx={x} cy={y} r="18.3" />
              <circle cx={x} cy={y} r="6.3" />
            </g>
          ))}
        </g>
      </g>
    </svg>
  );
}

function Workspace() {
  const [view, setView] = useState("2d");

  return (
    <main className="ml-1 flex min-w-0 flex-1 flex-col">
      <div className="flex h-[25px] items-end justify-between bg-[linear-gradient(#f0f0f0,#fdfdfd)] pl-[5px] text-xs">
        <div className="flex items-end">
          <button onClick={() => setView("2d")} aria-pressed={view === "2d"} className="flex h-[19px] font-bold leading-[17px]">
            <svg width="22" height="19" viewBox="0 0 22 19">
              <defs>
                <linearGradient id="docTab" x2="0" y2="1">
                  <stop offset="0" stopColor="#dbe5f8" />
                  <stop offset="1" stopColor="#8faae2" />
                </linearGradient>
              </defs>
              <path d="M0 19L15 3Q18 0 22 0V19z" fill="url(#docTab)" />
              <path d="M0 18.5L15 3Q18 .5 22 .5" fill="none" stroke="#8a94a8" />
            </svg>
            <span className="h-full border-r border-t border-[#8a94a8] bg-[linear-gradient(#dbe5f8,#8faae2)] pl-[3px] pr-1">
              cnc-table-FINAL DESIGN
            </span>
          </button>
          <button
            onClick={() => setView("3d")}
            aria-pressed={view === "3d"}
            className="h-[19px] rounded-t-[4px] border border-b-0 border-[#a9a18c] bg-[linear-gradient(#fff3d2,#fcd873)] px-2 leading-[17px]"
          >
            3D View
          </button>
        </div>
        <div className="flex h-6 items-center gap-[7px] pr-[3px]">
          <button aria-label="Previous tab">
            <svg width="6" height="9" viewBox="0 0 6 9"><path d="M5 .8V8.2L1 4.5z" fill="none" stroke="#000" /></svg>
          </button>
          <button aria-label="Next tab">
            <svg width="6" height="9" viewBox="0 0 6 9"><path d="M1 .8V8.2L5 4.5z" fill="none" stroke="#000" /></svg>
          </button>
          <button aria-label="Close tab">
            <svg width="9" height="8" viewBox="0 0 9 8"><path d="M1 .5L8 7.5M8 .5L1 7.5" stroke="#000" strokeWidth="1.6" /></svg>
          </button>
        </div>
      </div>

      <div className="flex min-h-0 flex-1 flex-col border border-[#8f96a6] border-b-2 bg-[#8aa6e2] p-[3px]">
        <div className="grid min-h-0 flex-1 grid-cols-[26px_1fr_17px] grid-rows-[26px_1fr_17px] bg-[#f0f0f0]">
          <div className="bg-[#f8f8fc]" />
          <div className="col-span-2">
            <HRuler />
          </div>

          <div className="min-h-0 row-span-2 pl-px">
            <VRuler />
          </div>
          <div className="min-h-0 min-w-0">
            <Canvas />
          </div>
          <div className="flex flex-col items-center border-l border-[#fafafa] bg-[#efefef] py-1.5">
            <svg width="8" height="5" viewBox="0 0 8 5"><path d="M0 4.5L4 0L8 4.5z" fill="#333" /></svg>
            <div className="flex-[410]" />
            <div className="flex w-[15px] flex-[174] flex-col items-center justify-center gap-0.5 rounded-[2px] border border-[#979797] bg-[linear-gradient(90deg,#f4f4f4,#e4e4e6_50%,#d0d0d4_50%,#bfc0c4)]">
              <i className="h-px w-[7px] bg-[#555]" />
              <i className="h-px w-[7px] bg-[#555]" />
              <i className="h-px w-[7px] bg-[#555]" />
            </div>
            <div className="flex-[292]" />
            <svg width="8" height="5" viewBox="0 0 8 5"><path d="M0 .5L4 5L8 .5z" fill="#333" /></svg>
          </div>

          <div className="flex items-center border-t border-[#fafafa] bg-[#ececec] px-1.5">
            <svg width="5" height="8" viewBox="0 0 5 8"><path d="M4.5 0L0 4L4.5 8z" fill="#333" /></svg>
            <div className="flex-[391]" />
            <div className="flex h-[15px] flex-[185] items-center justify-center gap-0.5 rounded-[2px] border border-[#979797] bg-[linear-gradient(#f4f4f4,#e4e4e6_50%,#cdcdd0_50%,#bcbdc0)]">
              <i className="h-[7px] w-px bg-[#555]" />
              <i className="h-[7px] w-px bg-[#555]" />
              <i className="h-[7px] w-px bg-[#555]" />
            </div>
            <div className="flex-[738]" />
            <svg width="5" height="8" viewBox="0 0 5 8"><path d="M.5 0L5 4L.5 8z" fill="#333" /></svg>
          </div>
          <div />
        </div>
      </div>
    </main>
  );
}

/* ================= TOOLPATH PANEL ================= */

function TabIcon({ kind }: { kind: "length" | "thickness" | "ridge" }) {
  if (kind === "length") {
    return (
      <svg width="40" height="32" viewBox="0 0 40 32">
        <path d="M3 24q18 9 35-1v5q-16 5-31 2z" fill="#b9b5ae" />
        <path d="M3 6Q10 3 18 5T34 6V11H29Q24 16 29 21.5H36L33 27Q18 31 5 27L1 21.5H8Q13 16 8 11.5L2 11z" fill="#fbe3a0" />
        <path d="M1 11.5H8Q13 16 8 21.5H1M36 11.5H29Q24 16 29 21.5H36M8 21.5H29" stroke="#8c6a35" fill="none" />
        <path d="M11.5 1V16M27.5 1V16" stroke="#000" strokeDasharray="3 2" />
      </svg>
    );
  }
  return (
    <svg width="40" height="18" viewBox="0 0 40 18">
      <rect x="3" y="5" width="34" height="12" rx="2" fill="#c9c4bb" />
      <rect x="1" y="2" width="34" height="12" fill="#fbe3a0" />
      <path d="M1 2.5H35" stroke="#9a6a35" />
      {kind === "thickness" ? (
        <>
          <rect x="10" y="7" width="17" height="7" fill="#b08a55" />
          <path d="M27 7.5H39M27 12.5H39" stroke="#000" strokeDasharray="2 1" />
        </>
      ) : (
        <>
          <rect x="8" y="6" width="21" height="8" fill="#f6c98e" />
          <path d="M8 14L18.5 8L29 14z" fill="#a07c48" />
        </>
      )}
    </svg>
  );
}

function ToolpathPanel() {
  const [tab, setTab] = useState("Tabs");

  return (
    <aside className="ml-1 flex w-[274px] shrink-0 flex-col">
      <PanelHeader title="Toolpaths" className="pl-1.5 pr-px" />
      <div className="flex-1 border-b border-[#8aa6c8] bg-[#d7e5f2] pb-4 pl-4 pr-1.5 pt-[9px] font-['DejaVu_Sans_Condensed','DejaVu_Sans',sans-serif] text-[11px] leading-4">
        <Card className="flex h-[38px] items-center gap-3">
          <svg width="32" height="28" viewBox="0 0 32 28">
            <path d="M0 6L25 0L32 20L9 28z" fill="#6b4a36" />
            <path d="M0 5L23 0L31 18L8 25z" fill="#dcae8c" />
            <path d="M6 8L20 4.5L25.5 16L11 19.5z" fill="#4b352a" />
            <path d="M9 9.5L19 7L23 15L12 17.5z" fill="#e8c0a2" />
          </svg>
          <h1 className="pt-px font-bold">2D Profile Toolpath</h1>
        </Card>

        <Card className="mt-[9px] h-[85px]">
          <div className="flex">
            <div className="w-[139px]">
              <h2 className="pt-px font-bold leading-4">Cutting Depths</h2>
              <div className="flex gap-[7px]">
                <svg className="mt-2 overflow-visible" width="38" height="24" viewBox="0 0 38 24">
                  <path d="M10.5 1V23H38V9H30.5V17H22.5V9H15V1z" fill="#9a9a9a" />
                  <path d="M38 9H30.5V17H22.5V9H15V1H10.5V23H38" fill="none" stroke="#000" strokeWidth="1.3" />
                  <path d="M2 1.5H10M2 9.5H10M2 17.5H10" stroke="#000" strokeDasharray="1 1" />
                  <text x="0" y="9" fontSize="8" className="font-['Liberation_Sans',sans-serif]">D</text>
                  <text x="0" y="17" fontSize="8" className="font-['Liberation_Sans',sans-serif]">C</text>
                </svg>
                <div>
                  <label htmlFor="start" className="block pb-[5px]">Start Depth (D)</label>
                  <label htmlFor="cut" className="block">Cut Depth (C)</label>
                </div>
              </div>
            </div>
            <div className="flex flex-col gap-1 pt-3">
              <span className="flex items-center gap-1.5 text-[#1c2b57]">
                <input id="start" defaultValue="0.0" className={field + " w-[54px]"} /> mm
              </span>
              <span className="flex items-center gap-1.5 text-[#1c2b57]">
                <input id="cut" defaultValue="18.796" className={field + " w-[54px]"} /> mm
              </span>
            </div>
          </div>
          <div className="mt-1.5">
            <Check label="Show advanced toolpath options" bold on />
          </div>
        </Card>

        <Card className="mt-1 h-[81px] pt-[3px]">
          <div className="flex h-5 items-center">
            <svg width="8" height="20" viewBox="0 0 8 20">
              <rect x="1" y="1" width="5" height="18" fill="#d8c469" stroke="#8c7a34" />
              <rect x="1" y="9" width="5" height="5" fill="#a08838" />
            </svg>
            <b className="ml-[7px] w-[34px]">Tool:</b>
            1/4" Up-cut (52-910)
          </div>
          <div className="mt-px flex justify-end gap-[18px]">
            <button className={btn + " h-[18px] w-[63px] leading-[14px]"}>Select ...</button>
            <button className={btn + " h-[18px] w-[63px] leading-[14px]"}>Edit ...</button>
          </div>
          <hr className="my-[6px] border-[#8f8f8f]" />
          <div className="flex items-center">
            <b className="w-[52px]">Passes:</b>4
            <button className={btn + " ml-auto h-[18px] w-[144px] leading-[14px]"}>Edit Passes ...</button>
          </div>
        </Card>

        <Card className="mt-1 h-[140px]">
          <div className="flex">
            <div className="w-[133px]">
              <h2 className="h-[21px] pt-px font-bold">Machine Vectors...</h2>
              <div className="flex flex-col gap-[3px] pl-[7px]">
                <Radio group="side" label="Outside / Right" bold />
                <Radio group="side" label="Inside / Left" bold />
                <Radio group="side" label="On" bold on />
              </div>
            </div>
            <svg className="mt-3.5" width="54" height="56" viewBox="0 0 54 56">
              <path d="M6 50H50V8" stroke="#ddd" strokeWidth="4" fill="none" />
              <path d="M3.5 25V3.5H48.5V48.5H32" stroke="#222" strokeWidth="1.3" fill="none" />
              {[10, 15, 21].map((x) => (
                <circle key={x} cx={x} cy="48" r="5.5" fill="#f0eab0" stroke="#b8b078" strokeWidth=".8" />
              ))}
              <path d="M3.5 25V48.5H26" stroke="#e02020" strokeWidth="1.2" fill="none" />
              <circle cx="29.5" cy="48" r="5.8" fill="#eee384" stroke="#6f6a35" />
              <path d="M3.5 21.5V29.5M0 25.5H7.5" stroke="#000" />
              <circle cx="3.5" cy="25.5" r="2.2" fill="none" stroke="#333" />
            </svg>
          </div>
          <div className="flex h-4 items-center">
            <b className="w-[67px]">Direction</b>
            <span className="w-[60px]"><Radio group="dir" label="Climb" /></span>
            <Radio group="dir" label="Conventional" on />
          </div>
          <div className="mt-1 flex items-center text-[#1c2b57]">
            <label htmlFor="allowance" className="w-[105px] pt-1 text-[#9a9a9a]">Allowance offset</label>
            <input id="allowance" defaultValue="0.0" disabled className={fieldOff + " w-[54px]"} />
            <span className="pl-1.5 pt-1">mm</span>
          </div>
          <div className="mt-1">
            <Check label="Use vector start points (don't optimize)" />
          </div>
        </Card>

        <div className="mt-1.5 flex items-end pr-1 font-['Open_Sans',sans-serif] text-xs">
          {["Tabs", "Leads", "Ramps", "Order", "Corners"].map((t) => (
            <button
              key={t}
              onClick={() => setTab(t)}
              className={
                t === tab
                  ? "h-[22px] w-[52px] border border-b-0 border-[#85898f] bg-white font-bold"
                  : "h-5 flex-1 border border-b-0 border-[#85898f] bg-[linear-gradient(#f3f3f3,#ebebeb_50%,#dddddd_50%,#cfcfcf)] leading-[17px] last:flex-[1.1]"
              }
            >
              {t}
            </button>
          ))}
        </div>
        <div className="border-x border-[#85898f] bg-white px-[3px] pt-0.5">
          <div className="h-[184px] border-b-2 border-r-2 border-[#7d7d7d] border-l border-l-[#ddd] bg-[#fdfdfd] px-2 pt-2.5 text-[#9a9a9a]">
            <div className="pl-1 text-black">
              <Check label="Add tabs to toolpath" bold />
            </div>
            <div className="mt-[9px] flex items-center">
              <TabIcon kind="length" />
              <label htmlFor="tabLength" className="w-[69px] pl-1">Length</label>
              <input id="tabLength" defaultValue="20.32" disabled className={fieldOff + " w-[41px]"} />
              <span className="pl-1.5">mm</span>
            </div>
            <div className="mt-2 flex items-center">
              <TabIcon kind="thickness" />
              <label htmlFor="tabThickness" className="w-[69px] pl-1">Thickness</label>
              <input id="tabThickness" defaultValue="3.048" disabled className={fieldOff + " w-[41px]"} />
              <span className="pl-1.5">mm</span>
            </div>
            <div className="mt-3 flex items-center gap-[5px]">
              <TabIcon kind="ridge" />
              <Check label="Create 3D tabs" disabled />
            </div>
            <div className="mt-7 flex justify-end pr-[19px]">
              <button disabled className="h-[21px] w-[76px] rounded-[3px] border border-[#adb2b5] bg-[#f4f4f4] text-[#838383]">
                Edit Tabs ....
              </button>
            </div>
          </div>
        </div>

        <Card className="mt-2 h-[118px] pt-1">
          <dl className="grid h-[51px] grid-cols-[78px_1fr] content-start gap-y-px">
            <dt>Safe Z</dt>
            <dd>6.0 mm</dd>
            <dt>Home Position</dt>
            <dd className="whitespace-nowrap">X:0.00 Y:0.00 Z:20.00</dd>
          </dl>
          <div className="mt-1 flex h-[29px] items-center border-y border-[#8f8f8f] pl-[3px]">
            <span className="w-24">Vector Selection:</span>
            Manual
            <button className={btn + " ml-auto h-[18px] w-[66px] leading-[14px]"}>Selector ...</button>
          </div>
          <div className="mt-[5px] flex items-center">
            <label htmlFor="name" className="w-[42px] pt-1">Name:</label>
            <input id="name" defaultValue="Profile 1" className={field + " min-w-0 flex-1"} />
          </div>
        </Card>

        <div className="mt-2 flex justify-between">
          <button className={btn + " h-[21px] w-[73px] !border-[#3c7fb1] leading-[17px] shadow-[inset_0_0_0_1px_#48c4ee]"}>Calculate</button>
          <button className={btn + " h-[21px] w-[73px] leading-[17px]"}>Close</button>
        </div>
      </div>
    </aside>
  );
}

/* ================= APP ================= */

export default function App() {
  return (
    <div className="flex h-screen flex-col overflow-hidden bg-[#f0f0f0] font-['Open_Sans','Noto_Sans',sans-serif] text-black">
      <TitleBar />
      <MenuBar />
      <div className="flex min-h-0 flex-1">
        <DrawingPanel />
        <Workspace />
        <ToolpathPanel />
      </div>
      <footer className="flex h-[21px] shrink-0 items-center justify-between border-b-2 border-t-2 border-b-[#10181c] border-t-[#9a9a9a] bg-[#f1eeec] text-xs leading-4">
        <span>Ready</span>
        <span className="h-full w-[535px]">
          <span className="block h-full w-[178px] border-r border-[#d5d5d5] leading-4">X:-295.3094 Y:640.4766</span>
        </span>
      </footer>
    </div>
  );
}
